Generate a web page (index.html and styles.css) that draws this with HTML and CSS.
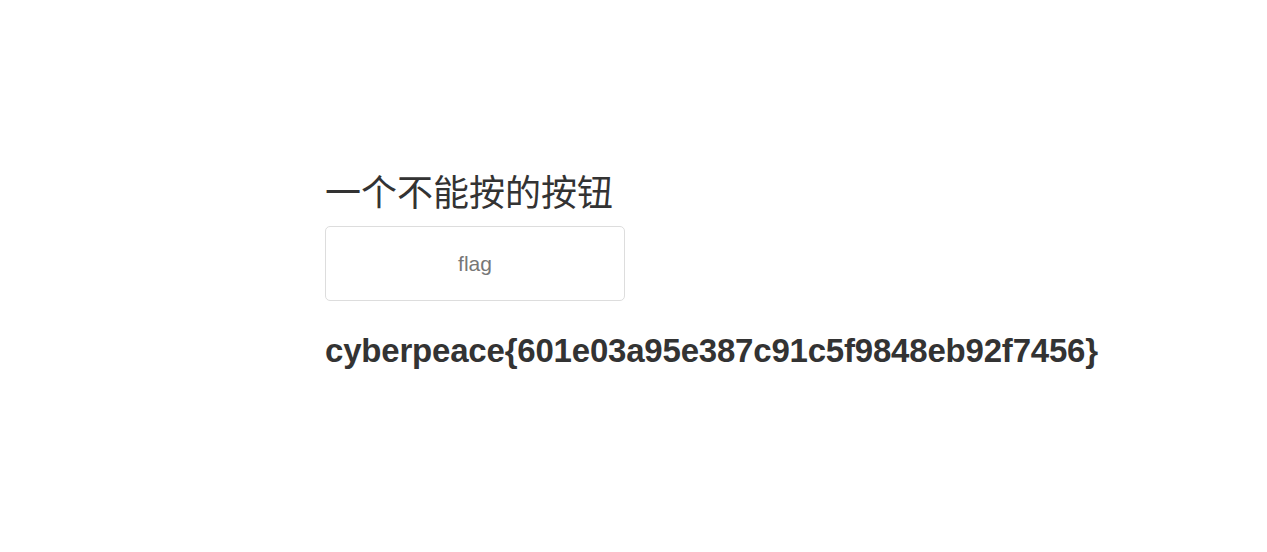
FILE: index.html
```html
<!DOCTYPE html>
<html lang="zh">
<head>
<meta charset="utf-8">
<title>一个不能按的按钮</title>
<link rel="stylesheet" href="styles.css">
</head>
<body>
<main class="page">
  <form class="panel">
    <h1 class="title">一个不能按的按钮</h1>
    <button type="button" class="flag-btn">flag</button>
    <h2 class="flag">cyberpeace{601e03a95e387c91c5f9848eb92f7456}</h2>
  </form>
</main>
</body>
</html>
```
FILE: styles.css
```css
html, body {
  margin: 0;
  padding: 0;
  background: #fff;
}
body {
  font-family: "Liberation Sans", Arial, "Noto Sans CJK SC", sans-serif;
  color: #333;
}
.page {
  padding: 166px 0 0 325px;
}
.panel {
  display: flex;
  flex-direction: column;
  align-items: flex-start;
}
.title {
  margin: 0 0 2px;
  font-family: "Noto Sans CJK SC", sans-serif;
  font-weight: 400;
  font-size: 36px;
  line-height: 48px;
  color: #333;
}
.flag-btn {
  margin-top: 10px;
  width: 300px;
  height: 75px;
  background: #fff;
  border: 1px solid #ddd;
  border-radius: 5px;
  font-family: "Liberation Sans", Arial, sans-serif;
  font-size: 21px;
  color: #777;
  padding: 0;
}
.flag {
  margin: 30px 0 0;
  font-family: "Liberation Sans", Arial, sans-serif;
  font-weight: 700;
  font-size: 33px;
  line-height: 40px;
  letter-spacing: -0.2px;
  color: #333;
}
```
